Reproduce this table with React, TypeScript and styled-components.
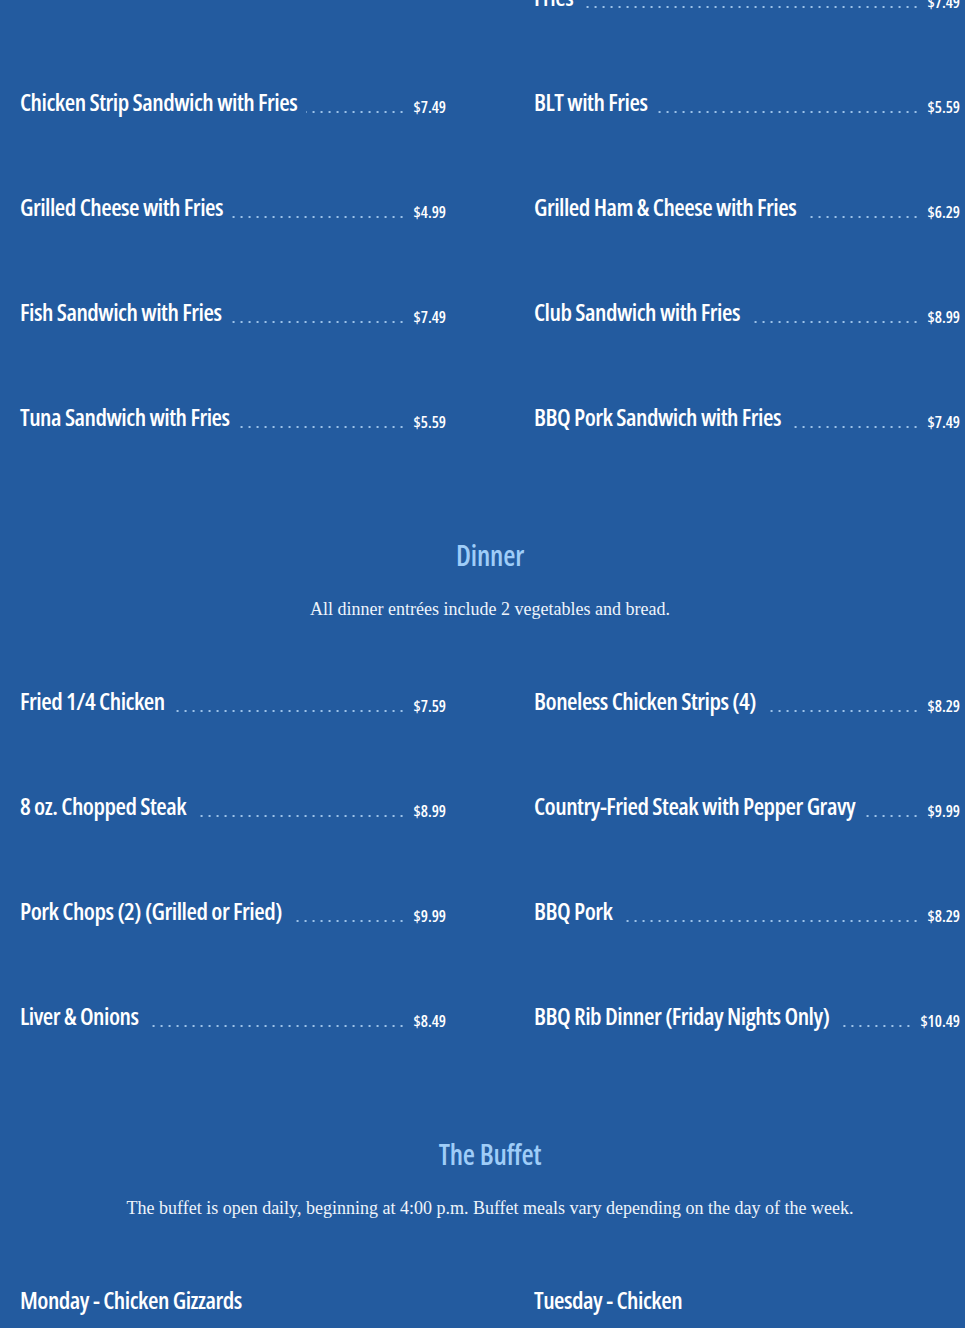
import React from "react";
import styled, { createGlobalStyle } from "styled-components";

const BG = "#235b9f";

const GlobalStyle = createGlobalStyle`
  html, body {
    margin: 0;
    padding: 0;
    background: ${BG};
  }
  body {
    font-family: "Open Sans", "Liberation Sans", sans-serif;
    color: #ffffff;
  }
`;

const Page = styled.main`
  background: ${BG};
  min-height: 1328px;
  overflow: hidden;
`;

/* the reference is scrolled down; emulate that scroll position */
const Scroll = styled.div`
  margin-top: -56px;
  padding: 0 5px 0 20px;
`;

const Section = styled.section`
  display: flex;
  flex-direction: column;
`;

const SectionHead = styled.header`
  padding-top: 101px;
  display: flex;
  flex-direction: column;
  align-items: center;
  gap: 22px;
  margin-bottom: 62px;
`;

const Heading = styled.h2`
  margin: 0;
  font-family: "Open Sans", "Liberation Sans", sans-serif;
  font-stretch: 75%;
  font-weight: 600;
  font-size: 28px;
  letter-spacing: -0.2px;
  line-height: 40px;
  color: #9fcdf8;
`;

const Note = styled.p`
  margin: 0;
  font-family: "Liberation Serif", "Times New Roman", serif;
  font-size: 18px;
  line-height: 24px;
  color: #eef4fb;
  text-align: center;
`;

const Grid = styled.div`
  display: grid;
  grid-template-columns: 1fr 1fr;
  column-gap: 88px;
  row-gap: 70px;
  align-items: start;
`;

const Item = styled.div`
  display: flex;
  align-items: flex-end;
  min-width: 0;
`;

const NameLine = styled.div<{ $leader: boolean }>`
  flex: 1;
  min-width: 0;
  font-stretch: 75%;
  font-weight: 600;
  font-size: 24px;
  letter-spacing: -0.5px;
  line-height: 35px;
  color: #ffffff;
  white-space: pre-line;
  margin-right: ${(p) => (p.$leader ? "8px" : "0")};
  background-image: ${(p) =>
    p.$leader
      ? "radial-gradient(circle, rgba(170,205,240,0.9) 0.9px, transparent 1.4px)"
      : "none"};
  background-size: 8px 4px;
  background-repeat: repeat-x;
  background-position: right 0 bottom 5px;
`;

const Name = styled.span`
  background: ${BG};
  padding-right: 9px;
`;

const Price = styled.span`
  flex: none;
  font-stretch: 75%;
  font-weight: 600;
  font-size: 16px;
  line-height: 24px;
  color: #ffffff;
`;

type MenuItem = { name: string; price?: string };

const MenuRow = ({ item }: { item: MenuItem }) => (
  <Item>
    <NameLine $leader={!!item.price}>
      <Name>{item.name}</Name>
    </NameLine>
    {item.price && <Price>{item.price}</Price>}
  </Item>
);

const sandwiches: MenuItem[] = [
  { name: "Hamburger with Fries", price: "$5.99" },
  { name: "Grilled Chicken Sandwich with\nFries", price: "$7.49" },
  { name: "Chicken Strip Sandwich with Fries", price: "$7.49" },
  { name: "BLT with Fries", price: "$5.59" },
  { name: "Grilled Cheese with Fries", price: "$4.99" },
  { name: "Grilled Ham & Cheese with Fries", price: "$6.29" },
  { name: "Fish Sandwich with Fries", price: "$7.49" },
  { name: "Club Sandwich with Fries", price: "$8.99" },
  { name: "Tuna Sandwich with Fries", price: "$5.59" },
  { name: "BBQ Pork Sandwich with Fries", price: "$7.49" },
];

const dinner: MenuItem[] = [
  { name: "Fried 1/4 Chicken", price: "$7.59" },
  { name: "Boneless Chicken Strips (4)", price: "$8.29" },
  { name: "8 oz. Chopped Steak", price: "$8.99" },
  { name: "Country-Fried Steak with Pepper Gravy", price: "$9.99" },
  { name: "Pork Chops (2) (Grilled or Fried)", price: "$9.99" },
  { name: "BBQ Pork", price: "$8.29" },
  { name: "Liver & Onions", price: "$8.49" },
  { name: "BBQ Rib Dinner (Friday Nights Only)", price: "$10.49" },
];

const buffet: MenuItem[] = [
  { name: "Monday - Chicken Gizzards" },
  { name: "Tuesday - Chicken" },
  { name: "Wednesday - Fried Fish" },
  { name: "Thursday - Chicken & Dumplings" },
];

export default function App() {
  return (
    <Page>
      <GlobalStyle />
      <Scroll>
        <Section>
          <Grid>
            {sandwiches.map((it) => (
              <MenuRow key={it.name} item={it} />
            ))}
          </Grid>
        </Section>

        <Section>
          <SectionHead>
            <Heading>Dinner</Heading>
            <Note>All dinner entrées include 2 vegetables and bread.</Note>
          </SectionHead>
          <Grid>
            {dinner.map((it) => (
              <MenuRow key={it.name} item={it} />
            ))}
          </Grid>
        </Section>

        <Section>
          <SectionHead>
            <Heading>The Buffet</Heading>
            <Note>
              The buffet is open daily, beginning at 4:00 p.m. Buffet meals vary depending on the day
              of the week.
            </Note>
          </SectionHead>
          <Grid>
            {buffet.map((it) => (
              <MenuRow key={it.name} item={it} />
            ))}
          </Grid>
        </Section>
      </Scroll>
    </Page>
  );
}
